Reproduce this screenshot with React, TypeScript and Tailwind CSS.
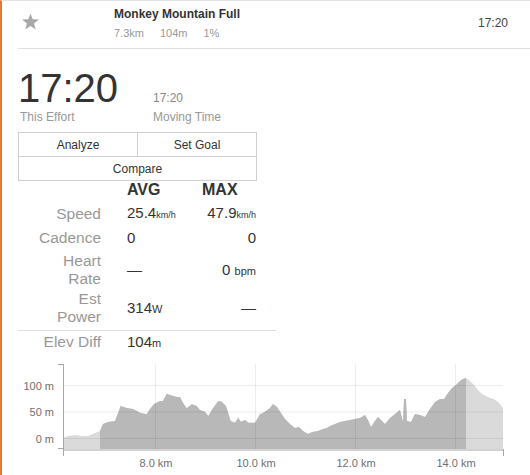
import React from "react";

// elevation profile, in page coordinates (x px, y px)
const profile: [number, number][] = [
  [63, 437], [68, 435], [75, 434], [82, 435], [88, 435], [95, 432], [100, 430],
  [103, 423], [108, 421], [115, 420], [120.7, 405], [126.7, 407], [133, 408],
  [140, 411.7], [146.7, 413.3], [150, 408], [154, 403], [160, 400], [163, 400],
  [166.7, 392.7], [170, 394], [176.7, 396], [180, 396], [183, 401.7], [186.7, 407.3],
  [191.7, 403.3], [196.7, 405], [200, 409], [205, 410.7], [208.3, 415], [213.3, 406.7],
  [218.3, 400], [221.7, 400.7], [226, 405], [230.7, 420], [235, 421.7], [238.3, 416.7],
  [240.7, 420.7], [245, 419], [248.3, 421.7], [255, 421.7], [260, 413.3], [265, 410.7],
  [270, 407], [273, 403], [277, 406], [281, 412], [285, 418], [290, 423], [295, 427],
  [299, 426], [303, 430], [308, 433], [312, 431], [318, 430], [323, 428], [327, 427],
  [330, 425], [335, 423], [340, 421], [345, 420], [350, 419], [355, 418], [360, 417],
  [365, 414], [368, 419], [371, 426], [375, 420], [378, 416], [382, 420], [385, 423],
  [390, 417], [395, 413], [400, 409], [403, 421], [404, 398], [406, 398], [407, 420],
  [411, 421], [415, 413], [420, 414], [425, 416], [430, 408], [435, 401], [440, 398],
  [444, 398], [448, 392], [452, 387], [456, 384], [460, 380], [463, 378], [466, 377],
  [470, 380], [474, 384], [478, 389], [482, 393], [486, 395], [490, 397], [494, 398],
  [498, 401], [501, 404], [503, 408],
];

const areaPath =
  "M63,448 " + profile.map(([x, y]) => `L${x},${y}`).join(" ") + " L503,448 Z";

const yLabels = [
  { label: "100 m", y: 384.5 },
  { label: "50 m", y: 411 },
  { label: "0 m", y: 437.5 },
];

const xLabels = [
  { label: "8.0 km", x: 155.5 },
  { label: "10.0 km", x: 255.5 },
  { label: "12.0 km", x: 355.5 },
  { label: "14.0 km", x: 455.5 },
];

function Star() {
  return (
    <svg width="19" height="18" viewBox="0 0 19 18">
      <polygon
        points="9.5,0.5 11.7,6.3 18,6.5 13,10.4 14.8,16.6 9.5,12.9 4.2,16.6 6,10.4 1,6.5 7.3,6.3"
        fill="#a9a9a9"
      />
    </svg>
  );
}

function ElevationChart() {
  return (
    <svg width="528" height="120" viewBox="2 355 528 120" className="block">
      <defs>
        <clipPath id="sel">
          <rect x="100" y="355" width="366" height="100" />
        </clipPath>
      </defs>

      <path d={areaPath} fill="#dadada" />
      <path d={areaPath} fill="#b8b8b8" clipPath="url(#sel)" />

      {/* grid */}
      {yLabels.map((l) => (
        <line key={l.label} x1="63" x2="503" y1={l.y} y2={l.y} stroke="#000" strokeOpacity="0.07" />
      ))}
      {xLabels.map((l) => (
        <line key={l.label} x1={l.x} x2={l.x} y1="363" y2="448" stroke="#000" strokeOpacity="0.07" />
      ))}

      {/* axes */}
      <rect x="63" y="448" width="440" height="2" fill="#d2d2d2" />
      <line x1="63.5" x2="63.5" y1="363" y2="455" stroke="#a8a8a8" />
      <line x1="58" x2="63" y1="363.5" y2="363.5" stroke="#a8a8a8" />
      <line x1="58" x2="63" y1="447.5" y2="447.5" stroke="#a8a8a8" />
      <line x1="503.5" x2="503.5" y1="448" y2="455" stroke="#a8a8a8" />

      <g fontFamily="'Liberation Sans', Arial, sans-serif" fontSize="11" fill="#6f6f6f">
        {yLabels.map((l) => (
          <text key={l.label} x="54" y={l.y + 4} textAnchor="end">
            {l.label}
          </text>
        ))}
        {xLabels.map((l) => (
          <text key={l.label} x={l.x + 0.5} y="466" textAnchor="middle">
            {l.label}
          </text>
        ))}
      </g>
    </svg>
  );
}

function Unit({ children }: { children: React.ReactNode }) {
  return <span className="text-[11px]">{children}</span>;
}

export default function App() {
  return (
    <div className="w-[530px] h-[475px] overflow-hidden bg-white border-l-2 border-l-[#e07b40] border-t border-t-[#e3e3e3] font-['Liberation_Sans',Arial,sans-serif] text-[#333]">
      {/* Segment header */}
      <div className="flex h-[47px]">
        <div className="w-[112px] pl-[19px] pt-[12px]">
          <Star />
        </div>
        <div className="pt-[6px]">
          <div className="text-[12px] leading-[14px] font-bold text-[#333]">Monkey Mountain Full</div>
          <div className="mt-[5px] flex gap-[16px] text-[11px] leading-[14px] text-[#999]">
            <span>7.3km</span>
            <span>104m</span>
            <span>1%</span>
          </div>
        </div>
        <div className="ml-auto mr-[22px] pt-[15px] text-[12px] leading-[14px] text-[#444]">17:20</div>
      </div>
      <div className="ml-[16px] border-t border-[#e0e0e0]" />

      {/* Effort time */}
      <div className="grid grid-cols-[133px_auto] items-baseline pl-[18px]">
        <div className="mt-[19px] -ml-[2px] text-[40px] leading-[40px] text-[#333]">17:20</div>
        <div className="text-[12px] leading-[14px] text-[#888]">17:20</div>
        <div className="mt-[2px] text-[12px] leading-[14px] text-[#999]">This Effort</div>
        <div className="text-[12px] leading-[14px] text-[#999]">Moving Time</div>
      </div>

      {/* Actions */}
      <div className="ml-[16px] mt-[8px] w-[239px] text-[12px] text-[#333]">
        <div className="flex h-[25px] border border-[#cfcfcf]">
          <button className="w-[119px] border-r border-[#cfcfcf] text-center">Analyze</button>
          <button className="flex-1 text-center">Set Goal</button>
        </div>
        <div className="flex h-[24px] items-center justify-center border-x border-b border-[#cfcfcf]">
          Compare
        </div>
      </div>

      {/* Stats table */}
      <div className="ml-[16px] w-[258px] text-[15px]">
        <div className="flex h-[17px] leading-[17px] text-[16px] font-bold text-[#333]">
          <div className="w-[109px]" />
          <div className="w-[75px]">AVG</div>
          <div>MAX</div>
        </div>

        <div className="mt-[4px] flex h-[24px] items-center leading-[24px]">
          <div className="w-[83px] text-right text-[15.5px] text-[#999]">Speed</div>
          <div className="ml-[26px] w-[75px]">25.4<span className="text-[9px]">km/h</span></div>
          <div className="w-[54px] text-right whitespace-nowrap">47.9<span className="text-[9px]">km/h</span></div>
        </div>

        <div className="flex h-[24px] items-center leading-[24px]">
          <div className="w-[83px] text-right text-[15.5px] text-[#999]">Cadence</div>
          <div className="ml-[26px] w-[75px]">0</div>
          <div className="w-[54px] text-right">0</div>
        </div>

        <div className="flex h-[40px] items-center py-[2px] leading-[18px]">
          <div className="w-[83px] text-right text-[15.5px] text-[#999]">Heart<br />Rate</div>
          <div className="ml-[26px] w-[75px]">—</div>
          <div className="w-[54px] text-right whitespace-nowrap">0 <Unit>bpm</Unit></div>
        </div>

        <div className="flex h-[40px] items-start pb-[4px] leading-[18px]">
          <div className="w-[83px] text-right text-[15.5px] text-[#999]">Est<br />Power</div>
          <div className="ml-[26px] w-[75px] self-center">314<Unit>W</Unit></div>
          <div className="w-[54px] self-center text-right">—</div>
        </div>

        <div className="flex h-[23px] items-start border-t border-[#dedede] pt-[2px] leading-[18px]">
          <div className="w-[83px] text-right text-[15.5px] text-[#999]">Elev Diff</div>
          <div className="ml-[26px] w-[75px]">104<Unit>m</Unit></div>
        </div>
      </div>

      <div className="mt-[3px]">
        <ElevationChart />
      </div>
    </div>
  );
}
